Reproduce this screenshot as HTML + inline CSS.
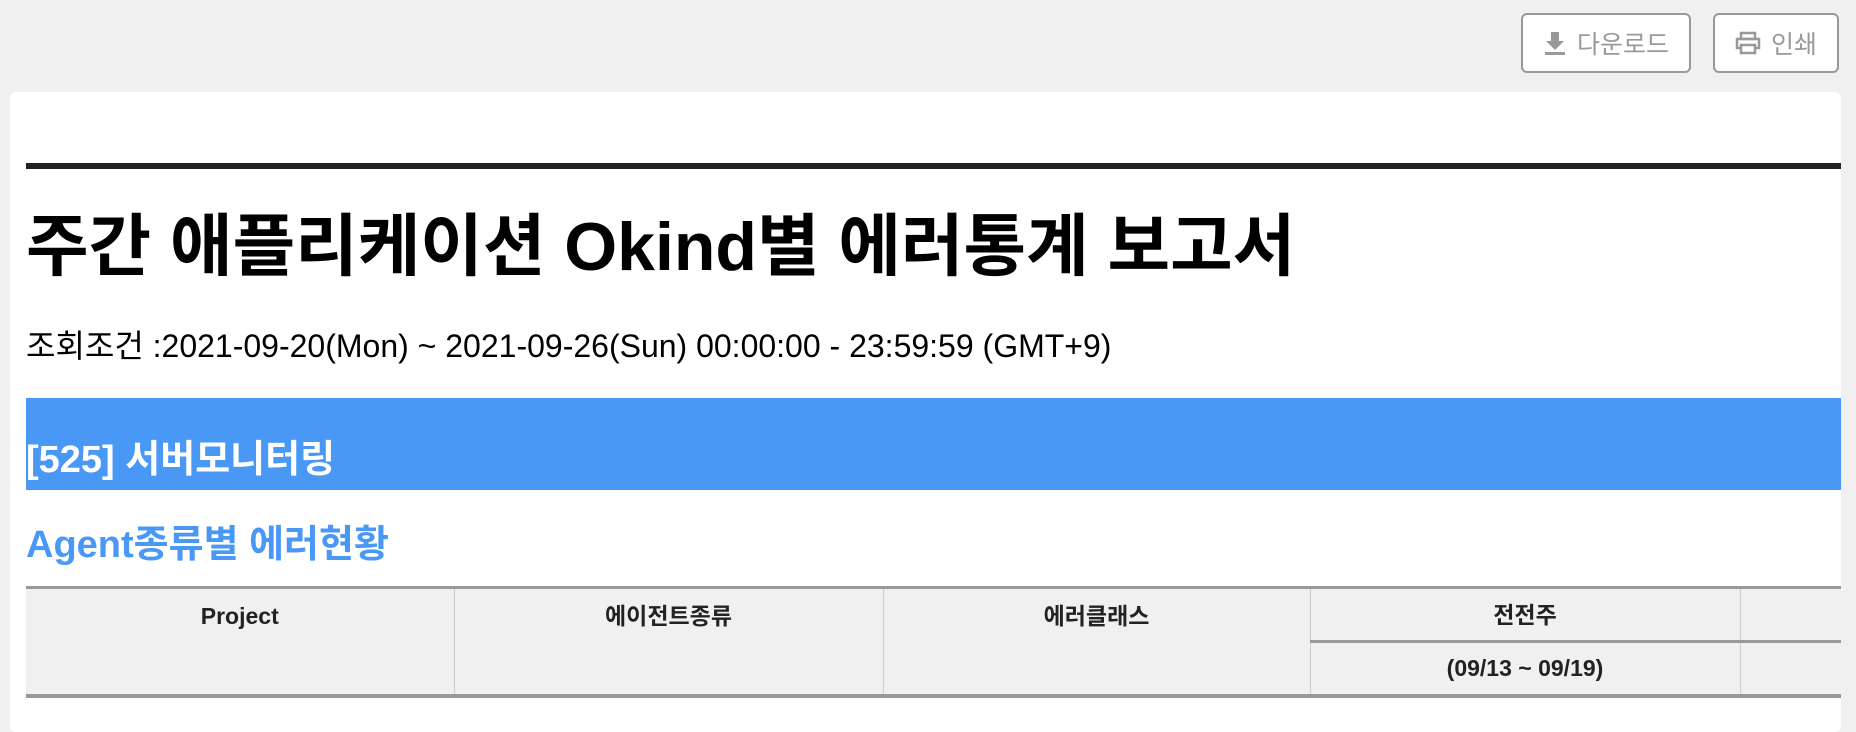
<!DOCTYPE html>
<html><head><meta charset="utf-8"><style>
body{margin:0;width:1856px;height:704px;background:#f0f0f0;overflow:hidden;font-family:"Liberation Sans","Noto Sans CJK KR",sans-serif;position:relative}
.btn{position:absolute;top:13px;height:60px;border:2px solid #999;border-radius:6px;background:#fff;box-sizing:border-box;color:#999;font-size:25px;display:flex;align-items:center;justify-content:center;gap:10px}
.card{position:absolute;left:10px;top:92px;width:1831px;height:640px;background:#fff;border-radius:6px}
.abs{position:absolute;white-space:nowrap}
table{position:absolute;left:26px;top:586px;border-collapse:collapse;background:#f0f0f0;font-weight:bold;font-size:23px;color:#222;table-layout:fixed}
td{border-left:1px solid #ccc;text-align:center;padding:0;line-height:28px}
</style></head><body>
<div class="btn" style="left:1521px;width:170px">
<svg width="24" height="26" viewBox="0 0 24 26"><path d="M8 2h8v9h5l-9 9-9-9h5z" fill="#999"/><rect x="2" y="22" width="20" height="3" fill="#999"/></svg>다운로드</div>
<div class="btn" style="left:1713px;width:126px">
<svg width="26" height="24" viewBox="0 0 26 24" fill="none" stroke="#999" stroke-width="2.5"><rect x="6" y="2" width="14" height="6"/><rect x="2" y="8" width="22" height="9"/><rect x="6" y="14" width="14" height="8" fill="#fff"/></svg>인쇄</div>
<div class="card"></div>
<div class="abs" style="left:26px;top:163px;width:1815px;height:6px;background:#222"></div>
<div class="abs" style="left:26px;top:207px;font-size:68px;font-weight:bold;color:#000;line-height:80px">주간 애플리케이션 Okind별 에러통계 보고서</div>
<div class="abs" style="left:26px;top:326px;font-size:32px;color:#000;line-height:40px">조회조건 :2021-09-20(Mon) ~ 2021-09-26(Sun) 00:00:00 - 23:59:59 (GMT+9)</div>
<div class="abs" style="left:26px;top:398px;width:1815px;height:92px;background:#4a98f5"></div>
<div class="abs" style="left:26px;top:437px;font-size:38px;font-weight:bold;color:#fff;line-height:46px">[525] 서버모니터링</div>
<div class="abs" style="left:26px;top:522px;font-size:38px;font-weight:bold;color:#4a98f5;line-height:46px">Agent종류별 에러현황</div>
<table style="width:1815px">
<colgroup><col style="width:428px"><col style="width:429px"><col style="width:427px"><col style="width:430px"><col></colgroup>
<tr style="height:54px;border-top:3px solid #999"><td rowspan="2" style="border-left:none;vertical-align:top;padding-top:13px">Project</td><td rowspan="2" style="vertical-align:top;padding-top:13px">에이전트종류</td><td rowspan="2" style="vertical-align:top;padding-top:13px">에러클래스</td><td>전전주</td><td></td></tr>
<tr style="height:54px;border-top:3px solid #999;border-bottom:4px solid #999"><td>(09/13 ~ 09/19)</td><td></td></tr>
</table>
</body></html>
